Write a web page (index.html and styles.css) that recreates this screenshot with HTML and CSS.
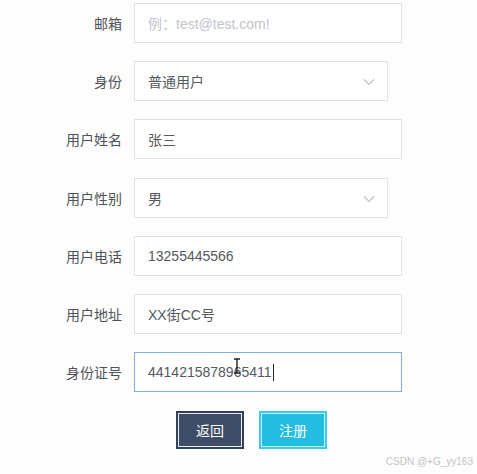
FILE: index.html
```html
<!DOCTYPE html>
<html lang="zh">
<head>
<meta charset="utf-8">
<title>注册</title>
<link rel="stylesheet" href="styles.css">
</head>
<body>
<form class="form">
  <div class="row">
    <label class="label">邮箱</label>
    <div class="field wide"><span class="placeholder">例：test@test.com!</span></div>
  </div>
  <div class="row">
    <label class="label">身份</label>
    <div class="field narrow select"><span class="value">普通用户</span>
      <svg class="chev" width="12" height="8" viewBox="0 0 12 8"><path d="M1 1.5 L6 6.5 L11 1.5" fill="none" stroke="#b9bec7" stroke-width="1.1"/></svg>
    </div>
  </div>
  <div class="row">
    <label class="label">用户姓名</label>
    <div class="field wide"><span class="value">张三</span></div>
  </div>
  <div class="row">
    <label class="label">用户性别</label>
    <div class="field narrow select"><span class="value">男</span>
      <svg class="chev" width="12" height="8" viewBox="0 0 12 8"><path d="M1 1.5 L6 6.5 L11 1.5" fill="none" stroke="#b9bec7" stroke-width="1.1"/></svg>
    </div>
  </div>
  <div class="row">
    <label class="label">用户电话</label>
    <div class="field wide"><span class="value">13255445566</span></div>
  </div>
  <div class="row">
    <label class="label">用户地址</label>
    <div class="field wide"><span class="value">XX街CC号</span></div>
  </div>
  <div class="row">
    <label class="label">身份证号</label>
    <div class="field wide focus"><span class="value">4414215878965411</span><span class="caret"></span>
      <svg class="ibeam" width="8" height="16" viewBox="0 0 8 16"><path d="M1 1 H7 M4 1 V15 M1 15 H7" fill="none" stroke="#222" stroke-width="1.4"/></svg>
    </div>
  </div>
  <div class="actions">
    <button type="button" class="btn btn-back">返回</button>
    <button type="button" class="btn btn-reg">注册</button>
  </div>
</form>
<div class="watermark">CSDN @+G_yy163</div>
</body>
</html>
```
FILE: styles.css
```css
html, body {
  margin: 0;
  padding: 0;
  background: #fdfdfd;
  font-family: "Liberation Sans", Arial, "Noto Sans CJK SC", sans-serif;
}
.form {
  display: flex;
  flex-direction: column;
  gap: 18.2px;
  padding-top: 3px;
}
.row {
  display: grid;
  grid-template-columns: 122px auto;
  column-gap: 12px;
  align-items: center;
}
.label {
  text-align: right;
  font-size: 14px;
  color: #4f5257;
}
.field {
  position: relative;
  box-sizing: border-box;
  height: 40px;
  border: 1px solid #dfe1e5;
  background: #fff;
  display: flex;
  align-items: center;
  padding-left: 13px;
  font-size: 14px;
}
.wide { width: 268px; }
.narrow { width: 254px; }
.value { color: #55585e; }
.placeholder { color: #c0c4cc; }
.select .chev {
  position: absolute;
  right: 12px;
  top: 16px;
}
.focus { border-color: #7aaee4; }
.caret {
  display: inline-block;
  width: 1px;
  height: 17px;
  background: #222;
  margin-left: 1px;
}
.ibeam {
  position: absolute;
  left: 98px;
  top: 5px;
}
.actions {
  display: flex;
  gap: 15px;
  padding-left: 176px;
  margin-top: 0.8px;
}
.btn {
  box-sizing: border-box;
  width: 68px;
  height: 38px;
  font-family: "Liberation Sans", "Noto Sans CJK SC", sans-serif;
  font-size: 14px;
  color: #fff;
  padding: 0;
  cursor: pointer;
}
.btn-back {
  background: #3e4c67;
  border: 2px solid #33405a;
  box-shadow: inset 0 0 0 1px #e8ebf0;
}
.btn-reg {
  background: #24bde2;
  border: 2px solid #3ccaee;
  box-shadow: inset 0 0 0 1px #c9f1fb;
}
.watermark {
  position: absolute;
  right: 4px;
  top: 456px;
  font-size: 10px;
  white-space: nowrap;
  color: #c4c4c4;
}
```
